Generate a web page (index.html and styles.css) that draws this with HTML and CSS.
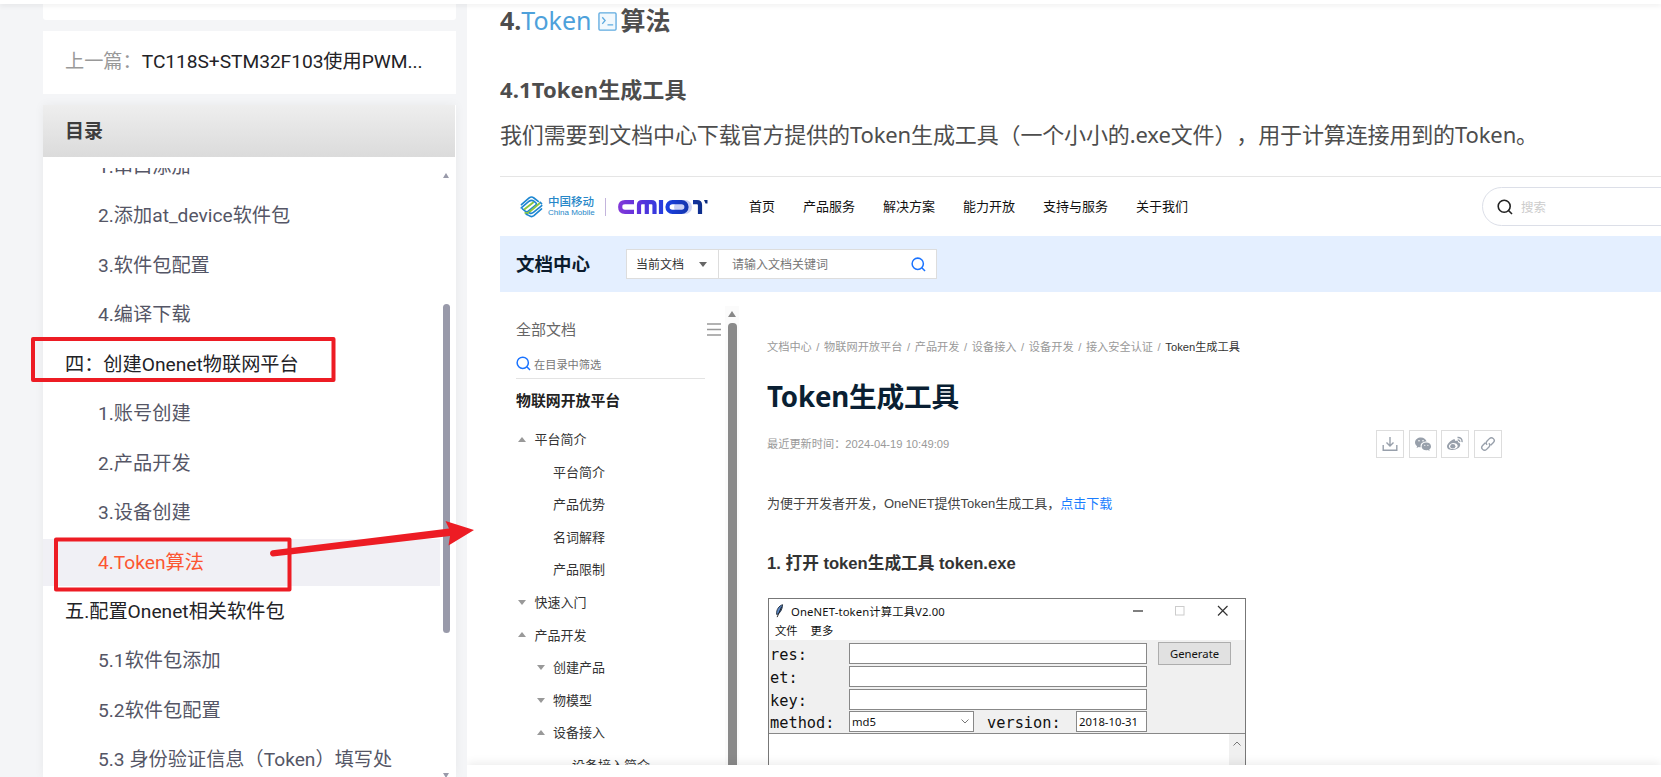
FILE: index.html
```html
<!DOCTYPE html>
<html lang="zh-CN">
  <head>
    <meta charset="UTF-8" />
    <meta name="viewport" content="width=device-width, initial-scale=1.0" />
    <title>Token算法</title>
    <link rel="stylesheet" href="styles.css">
  </head>
  <body>
    <div class="topbar"></div>
    <div class="page">
      <aside class="sidebar">
        <div class="card card_top"></div>
        <div class="card prev_post">
          <span>上一篇：</span><a>TC118S+STM32F103使用PWM...</a>
        </div>
        <div class="toc">
          <h3 class="toc_title">目录</h3>
          <div class="toc_body">
            <ul class="toc_list">
              <li class="sub">1.串口添加</li>
              <li class="sub">2.添加at_device软件包</li>
              <li class="sub">3.软件包配置</li>
              <li class="sub">4.编译下载</li>
              <li>四：创建Onenet物联网平台</li>
              <li class="sub">1.账号创建</li>
              <li class="sub">2.产品开发</li>
              <li class="sub">3.设备创建</li>
              <li class="sub active">4.Token算法</li>
              <li>五.配置Onenet相关软件包</li>
              <li class="sub">5.1软件包添加</li>
              <li class="sub">5.2软件包配置</li>
              <li class="sub">5.3 身份验证信息（Token）填写处</li>
            </ul>
            <div class="toc_scroll">
              <i class="tri up"></i>
              <i class="thumb"></i>
              <i class="tri down"></i>
            </div>
          </div>
        </div>
      </aside>

      <main class="article">
        <div class="article_body">
          <h2>4.<a>Token<svg class="term" viewBox="0 0 20 20"><rect x="1" y="1" width="18" height="18" rx="1" /><path d="M4.5 5.5l3 3.5-3 3.5M10 13.5h6" /></svg></a>算法</h2>
          <h3>4.1Token生成工具</h3>
          <p>我们需要到文档中心下载官方提供的Token生成工具（一个小小的.exe文件），用于计算连接用到的Token。</p>

          <div class="shot">
            <div class="nav">
              <svg class="cm_logo" viewBox="0 0 24 24">
                <g fill="none" stroke-linecap="round" stroke-width="1.7">
                  <path stroke="#1c86d1" d="M1.5 9.5L9.5 2.6q2.5-2 5 0l4.5 3.6" />
                  <path stroke="#1c86d1" d="M1.3 13L9.5 6q2.5-2 5 0l1.8 1.4q1.6 1.3 0 2.7L8.6 16.4q-1.6 1.2-3.2 0L2.6 14" />
                  <path stroke="#8cc63f" stroke-width="2" d="M5 14.2l8.7-6.9M5.5 18.2q2 .8 3.6-.4L20.5 8" />
                  <path stroke="#1c86d1" d="M22.5 14L14.5 21q-2.5 2-5 0L6.5 19.5" />
                  <path stroke="#1c86d1" d="M22.7 10.5L14 17.7q-2 1.6-4 .5M21 7l1.5 1.5" />
                </g>
              </svg>
              <div class="cm_name"><b>中国移动</b><span>China Mobile</span></div>
              <i class="split"></i>
              <svg class="cmiot" viewBox="0 0 90 16">
                <defs>
                  <linearGradient id="iot" gradientUnits="userSpaceOnUse" x1="0" y1="0" x2="90" y2="0">
                    <stop offset="0" stop-color="#8338d8" />
                    <stop offset=".25" stop-color="#5b32dc" />
                    <stop offset=".55" stop-color="#1a3fdf" />
                    <stop offset="1" stop-color="#0b2a7c" />
                  </linearGradient>
                </defs>
                <rect x="56" y="1" width="18" height="14" rx="7" fill="#c9d0f5" />
                <g fill="none" stroke="url(#iot)" stroke-width="4.2">
                  <path d="M16 3.1H7q-4.800 0-4.800 4.900T7 12.900h9" />
                  <path d="M21 15V6q0-2.900 3-2.900h9.500q3 0 3 2.900v9M28.800 4v11" />
                  <path d="M43 1v14" />
                  <rect x="49.500" y="3.100" width="19" height="9.800" rx="4.900" />
                  <path d="M75 3.100h4q3 0 3 3V15" />
                </g>
                <path d="M86 1h3.500v3.500h-2z" fill="#0b2a7c" />
              </svg>
              <ul class="menu">
                <li>首页</li>
                <li>产品服务</li>
                <li>解决方案</li>
                <li>能力开放</li>
                <li>支持与服务</li>
                <li>关于我们</li>
              </ul>
              <div class="pill">
                <svg class="search" viewBox="0 0 16 16"><circle cx="7.200" cy="7.200" r="6" /><path d="M11.500 11.500l3.500 3.500" /></svg>
                搜索
              </div>
            </div>

            <div class="banner">
              <strong>文档中心</strong>
              <div class="finder">
                <span class="scope">当前文档<i class="tri down"></i></span>
                <span class="keyword">请输入文档关键词</span>
                <svg class="search" viewBox="0 0 16 16"><circle cx="7.200" cy="7.200" r="6" /><path d="M11.500 11.500l3.500 3.500" /></svg>
              </div>
            </div>

            <div class="docs">
              <div class="tree">
                <div class="tree_head">全部文档
                  <svg viewBox="0 0 14 13"><path d="M0 1h14M0 6.500h14M0 12h14" /></svg>
                </div>
                <div class="tree_filter">
                  <svg class="search" viewBox="0 0 16 16"><circle cx="7.200" cy="7.200" r="6" /><path d="M11.500 11.500l3.500 3.500" /></svg>
                  在目录中筛选
                </div>
                <div class="tree_title">物联网开放平台</div>
                <ul>
                  <li><i class="tri up"></i>平台简介</li>
                  <li class="lv2">平台简介</li>
                  <li class="lv2">产品优势</li>
                  <li class="lv2">名词解释</li>
                  <li class="lv2">产品限制</li>
                  <li><i class="tri down"></i>快速入门</li>
                  <li><i class="tri up"></i>产品开发</li>
                  <li class="lv2"><i class="tri down"></i>创建产品</li>
                  <li class="lv2"><i class="tri down"></i>物模型</li>
                  <li class="lv2"><i class="tri up"></i>设备接入</li>
                  <li class="lv3">设备接入简介</li>
                </ul>
              </div>
              <div class="tree_scroll"><i class="tri up"></i><i class="thumb"></i></div>

              <div class="doc">
                <div class="crumbs">
                  <span>文档中心</span><span>物联网开放平台</span><span>产品开发</span><span>设备接入</span><span>设备开发</span><span>接入安全认证</span><span class="now">Token生成工具</span>
                </div>
                <h1>Token生成工具</h1>
                <div class="meta">
                  <span class="time">最近更新时间：2024-04-19 10:49:09</span>
                  <div class="share">
                    <span><svg viewBox="0 0 16 16"><path class="line" d="M1.200 9v5.300h13.600V9M8 1v8.500M4.500 6.500L8 10l3.500-3.500" /></svg></span>
                    <span><svg viewBox="0 0 16 16"><path d="M6 1.500C2.700 1.500 0 3.600 0 6.400c0 1.500.8 2.800 2.100 3.700L1.600 12l2.100-1.100q1 .3 2 .3C5 7.800 7.600 5.600 11.600 5.600 11 3.200 8.800 1.500 6 1.500zM11.300 6.500c-2.700 0-4.700 1.700-4.700 3.900s2 3.900 4.700 3.900q.8 0 1.600-.2l1.700.9-.4-1.500c1.100-.7 1.800-1.800 1.800-3.100 0-2.200-2-3.900-4.700-3.900z" /><g fill="#fff"><circle cx="4" cy="4.800" r=".8" /><circle cx="8" cy="4.800" r=".8" /><circle cx="9.800" cy="9.300" r=".6" /><circle cx="12.900" cy="9.300" r=".6" /></g></svg></span>
                    <span><svg viewBox="0 0 16 16"><path fill-rule="evenodd" d="M6.200 3.500c1-.5 2.200-.2 1.900 1.500 1.600-.6 3.300-.5 2.900 1.300 3.500 1 2.400 4.300.4 5.800C7 15.300 0 14.200 0 10.400 0 8 3.500 4.600 6.200 3.500zM6 7C3.600 7.200 1.800 8.700 1.900 10.400S4.200 13.200 6.600 13s4.200-1.700 4.100-3.300S8.400 6.800 6 7z" /><ellipse cx="5.800" cy="10.300" rx="2.600" ry="2.200" /><path class="line" d="M10.500 1.500c2.800-.4 5 1.800 4.500 4.600M10.700 4c1.400-.2 2.200.8 2 1.900" /></svg></span>
                    <span><svg viewBox="0 0 16 16"><g class="line" transform="rotate(-45 8 8)"><path d="M7 5.200H3.200a2.800 2.800 0 0 0 0 5.600h3.300a2.800 2.800 0 0 0 2.700-2.800M9 10.800h3.800a2.800 2.800 0 0 0 0-5.600H9.500A2.800 2.800 0 0 0 6.800 8" /></g></svg></span>
                  </div>
                </div>
                <p class="intro">为便于开发者开发，OneNET提供Token生成工具，<a>点击下载</a></p>
                <h4>1. 打开 token生成工具 token.exe</h4>

                <div class="win">
                  <div class="win_title">
                    <svg class="feather" viewBox="0 0 10 16"><path d="M8.500.8C4.500 2 1 6.500 1.800 12c3-.5 6.500-5 6.700-11.200z" fill="#5b86c4" stroke="#1c2733" /><path d="M7.500 3L2.300 15" stroke="#111" fill="none" /></svg>
                    <span>OneNET-token计算工具V2.00</span>
                    <svg class="ctrl" viewBox="0 0 96 12"><path d="M1 6h10" stroke="#555" stroke-width="1.500" /><rect x="43.500" y="1.500" width="8.500" height="8.500" stroke="#ccc" /><path d="M86 1l9.500 9.500M95.500 1L86 10.500" stroke="#333" stroke-width="1.200" /></svg>
                  </div>
                  <div class="win_menu"><span>文件</span><span>更多</span></div>
                  <div class="form">
                    <label>res:</label><i class="input wide"></i><button>Generate</button>
                    <label>et:</label><i class="input wide"></i>
                    <label>key:</label><i class="input wide"></i>
                    <label>method:</label><span class="input">md5<svg viewBox="0 0 8 5"><path d="M.5.500L4 4 7.500.500" /></svg></span><label class="version">version:</label><span class="input">2018-10-31</span>
                  </div>
                  <div class="output">
                    <div class="output_bar"><svg viewBox="0 0 8 5"><path d="M.5 4.500L4 1l3.500 3.500" /></svg></div>
                  </div>
                </div>
              </div>
            </div>
          </div>
        </div>
        <div class="toolbar"></div>
      </main>
    </div>

    <!-- 标注 -->
    <svg class="marks" viewBox="0 0 500 777">
      <rect x="33" y="339" width="300.500" height="41" />
      <rect x="56" y="539.500" width="233.500" height="50" />
      <path d="M272.500 550.200L449 528.500l-3.500-7.500L474 530l-25.500 15.500 1.500-9.500L273 556.500a3.200 3.200 0 0 1-.5-6.300z" />
    </svg>
  </body>
</html>
```

FILE: styles.css
```css
* {
  margin: 0;
  padding: 0;
  box-sizing: border-box;
}
li {
  list-style: none;
}
i {
  font-style: normal;
}
body {
  height: 777px;
  overflow: hidden;
  position: relative;
  background: #f4f5f7;
  font-family: Roboto, "Noto Sans CJK SC", sans-serif;
  white-space: nowrap;
  text-spacing-trim: space-all;
}
.topbar {
  position: relative;
  z-index: 2;
  height: 4px;
  background: #fff;
  box-shadow: 0 2px 5px rgba(0, 0, 0, 0.07);
}
.page {
  display: flex;
  height: 773px;
}

/* triangles */
.tri {
  display: block;
  width: 0;
  height: 0;
  border: 4px solid transparent;
}
.tri.up {
  border-top: 0;
  border-bottom: 5px solid #999;
}
.tri.down {
  border-bottom: 0;
  border-top: 5px solid #999;
}
.search {
  fill: none;
  stroke: #1a73ff;
  stroke-width: 1.6;
}

/* sidebar */
.sidebar {
  width: 413px;
  margin-left: 43px;
  display: flex;
  flex-direction: column;
  gap: 11px;
  font-size: 19.2px;
}
.card {
  background: #fff;
}
.card_top {
  height: 16px;
  border-radius: 0 0 3px 3px;
}
.prev_post {
  height: 63px;
  line-height: 61px;
  padding-left: 22px;
  color: #999;
}
.prev_post a {
  color: #222226;
  letter-spacing: -0.05px;
}
.toc {
  flex: 1;
  min-height: 0;
  display: flex;
  flex-direction: column;
  background: #fff;
  box-shadow: 0 0 10px rgba(0, 0, 0, 0.05);
}
.toc_title {
  height: 52px;
  margin-right: 1px;
  line-height: 54px;
  padding-left: 22px;
  font-size: 19px;
  color: #3d3d3d;
  background: linear-gradient(#eee, #dbdbdb);
}
.toc_body {
  flex: 1;
  min-height: 0;
  margin-top: 11px;
  display: flex;
  overflow: hidden;
}
.toc_list {
  width: 397px;
  margin-top: -25px;
}
.toc_list li {
  height: 47px;
  margin-bottom: 2.45px;
  line-height: 47px;
  padding-left: 22px;
  color: #222226;
}
.toc_list .sub {
  padding-left: 55px;
  color: #555666;
}
.toc_list .active {
  background: #f0f0f5;
  color: #fc5531;
}
.toc_scroll {
  width: 7px;
  margin-left: 3px;
  padding-top: 5px;
  display: flex;
  flex-direction: column;
}
.toc_scroll .tri {
  border-left-width: 3.5px;
  border-right-width: 3.5px;
}
.toc_scroll .up {
  border-bottom-color: #999aaa;
}
.toc_scroll .down {
  margin-top: 140px;
  border-top-color: #999aaa;
}
.toc_scroll .thumb {
  flex: none;
  height: 329px;
  margin-top: 126px;
  border-radius: 4px;
  background: #999aaa;
}

/* article */
.article {
  flex: 1;
  min-width: 0;
  margin-left: 11px;
  background: #fff;
  overflow: hidden;
  color: #4d4d4d;
  font-family: "Noto Sans", "Noto Sans CJK SC", sans-serif;
}
.article_body {
  height: 761px;
  padding-left: 33px;
  overflow: hidden;
}
.article h2 {
  height: 34px;
  line-height: 33px;
  font-size: 25px;
}
.article h2 a {
  font-weight: 400;
  color: #4ea1db;
}
.term {
  width: 19px;
  height: 19px;
  margin: 0 4px 0 6px;
  vertical-align: -1px;
  fill: #f1f8fd;
  stroke: #5fabe0;
  stroke-width: 1.4;
}
.article h3 {
  height: 32px;
  margin-top: 35px;
  line-height: 32px;
  font-size: 22px;
  letter-spacing: 0.1px;
}
.article_body > p {
  height: 36px;
  margin: 11px 0 24px;
  line-height: 36px;
  font-size: 22px;
  letter-spacing: -0.13px;
}
.toolbar {
  position: relative;
  height: 12px;
  background: #fff;
  box-shadow: 0 -2px 10px rgba(0, 0, 0, 0.08);
}

/* doc center */
.shot {
  border-top: 1px solid #e5e5e5;
  font-size: 13px;
  color: #333;
}
.nav {
  height: 59px;
  display: flex;
  align-items: center;
  padding-left: 20px;
}
.nav > * {
  flex: none;
}
.cm_logo {
  width: 23px;
  height: 24px;
}
.cm_name {
  width: 47px;
  margin-left: 5px;
  color: #2787c8;
}
.cm_name b,
.cm_name span {
  display: block;
  font-size: 11.5px;
  line-height: 12px;
  font-weight: 500;
}
.cm_name span {
  font-family: "Liberation Sans", sans-serif;
  font-size: 8px;
  line-height: 9px;
}
.split {
  width: 1px;
  height: 18px;
  margin: 0 12px 0 10px;
  background: #c3b4dc;
}
.cmiot {
  width: 90px;
  height: 16px;
}
.menu {
  display: flex;
  gap: 28px;
  margin: 0 0 2px 41px;
  color: #111;
}
.pill {
  width: 300px;
  height: 39px;
  margin-left: 294px;
  padding-left: 14px;
  display: flex;
  align-items: center;
  gap: 8px;
  border: 1px solid #dcdfe8;
  border-radius: 20px;
  font-size: 12.5px;
  color: #ccc;
}
.pill .search {
  width: 16px;
  height: 16px;
  stroke: #222;
}
.banner {
  height: 56px;
  display: flex;
  align-items: center;
  padding-left: 16px;
  background: #e4efff;
}
.banner strong {
  width: 110px;
  margin-bottom: 2px;
  font-size: 18.5px;
  color: #0b1b2d;
}
.finder {
  width: 311px;
  height: 30px;
  display: flex;
  align-items: center;
  padding-right: 10px;
  border: 1px solid #ddd;
  background: #fff;
  font-size: 12px;
}
.scope {
  width: 92px;
  height: 28px;
  padding: 0 11px 0 9px;
  display: flex;
  align-items: center;
  justify-content: space-between;
  border-right: 1px solid #ddd;
}
.scope .tri {
  border-top-color: #666;
}
.keyword {
  flex: 1;
  padding-left: 13px;
  color: #777;
}
.finder .search {
  width: 15px;
  height: 15px;
}
.docs {
  display: flex;
}
.tree {
  width: 225px;
  padding: 21px 0 0 16px;
}
.tree_head {
  height: 30px;
  padding-right: 4px;
  display: flex;
  align-items: center;
  justify-content: space-between;
  font-size: 15px;
  color: #666;
}
.tree_head svg {
  width: 14px;
  height: 13px;
  margin-top: 2px;
  stroke: #999;
  stroke-width: 1.6;
}
.tree_filter {
  width: 189px;
  height: 28px;
  margin-top: 8px;
  padding-bottom: 2px;
  display: flex;
  align-items: center;
  gap: 3px;
  border-bottom: 1px solid #e3e3e3;
  font-size: 11.2px;
  color: #777;
}
.tree_filter .search {
  width: 15px;
  height: 15px;
}
.tree_title {
  height: 44px;
  line-height: 43px;
  font-size: 14.9px;
  font-weight: 700;
  color: #222;
}
.tree li {
  height: 32.6px;
  line-height: 32.6px;
  padding-left: 18.5px;
  display: flex;
  align-items: center;
}
.tree .lv2 {
  padding-left: 37px;
}
.tree .lv3 {
  padding-left: 56px;
}
.tree li .tri {
  margin: 0 8.5px 0 -16.5px;
}
.tree_scroll {
  width: 14px;
  margin-top: 14px;
  padding: 5px 2px 0 3px;
  background: #fbfbfb;
}
.tree_scroll .tri {
  border-bottom: 6px solid #888;
}
.tree_scroll .thumb {
  display: block;
  height: 460px;
  margin-top: 6px;
  border-radius: 4px;
  background: #8a8a8a;
}
.doc {
  padding: 45px 0 0 28px;
}
.crumbs {
  height: 20px;
  line-height: 20px;
  font-size: 11.2px;
  color: #999;
}
.crumbs span + span::before {
  content: "/";
  margin: 0 4.6px;
  color: #999;
}
.crumbs .now {
  color: #333;
}
.doc h1 {
  height: 40px;
  margin-top: 19px;
  line-height: 40px;
  font-size: 27.7px;
  letter-spacing: -0.2px;
  color: #0a1f33;
}
.meta {
  width: 735px;
  height: 28px;
  margin-top: 14px;
  display: flex;
  align-items: center;
  justify-content: space-between;
  font-size: 11.2px;
  color: #999;
}
.time,
.intro,
.crumbs,
.doc h4 {
  font-family: "Liberation Sans", "Noto Sans CJK SC", sans-serif;
}
.time {
  margin-bottom: 2px;
}
.share {
  display: flex;
  gap: 4.7px;
}
.share span {
  width: 28px;
  height: 28px;
  display: flex;
  align-items: center;
  justify-content: center;
  border: 1px solid #ddd;
}
.share svg {
  width: 16px;
  height: 16px;
  fill: #98a0ab;
}
.share .line {
  fill: none;
  stroke: #98a0ab;
  stroke-width: 1.4;
}
.intro {
  height: 24px;
  margin-top: 34px;
  line-height: 24px;
  color: #444;
}
.intro a {
  color: #1a7dff;
}
.doc h4 {
  height: 24px;
  margin-top: 36px;
  line-height: 24px;
  font-size: 16.65px;
  color: #333;
}

/* token tool window */
.win {
  width: 478px;
  height: 200px;
  margin: 22px 0 0 1px;
  border: 1px solid #777;
  background: #f0f0f0;
  font-size: 11.3px;
  color: #111;
}
.win_title {
  height: 23px;
  padding: 0 17px 0 6px;
  display: flex;
  align-items: center;
  background: #fff;
}
.win_title span {
  letter-spacing: 0.13px;
}
.feather {
  width: 9px;
  height: 14px;
  margin-right: 7px;
}
.ctrl {
  width: 96px;
  height: 12px;
  margin-left: auto;
  fill: none;
}
.win_menu {
  height: 18px;
  padding-left: 6px;
  display: flex;
  gap: 13px;
  line-height: 18px;
  background: #fff;
}
.form {
  display: grid;
  grid-template-columns: 79px 125px 102px 71px 73px;
  grid-template-rows: repeat(4, 21px);
  row-gap: 1.8px;
  padding: 3px 0 0 1px;
}
.form label {
  grid-column: 1;
  font-family: "DejaVu Sans Mono", monospace;
  font-size: 15.3px;
  line-height: 24px;
}
.form .version {
  grid-column: 3;
  padding-left: 13px;
}
.input {
  display: flex;
  align-items: center;
  justify-content: space-between;
  padding: 0 4px 0 2px;
  border: 1px solid #888;
  background: #fff;
}
.input.wide {
  grid-column: 2 / 5;
}
.input svg,
.output_bar svg {
  width: 8px;
  height: 5px;
  fill: none;
  stroke: #777;
}
.form button {
  margin-left: 11px;
  width: 73px;
  height: 23px;
  margin-top: -1px;
  border: 1px solid #adadad;
  background: #e1e1e1;
  font: inherit;
  color: #111;
}
.output {
  height: 80px;
  margin-top: 1px;
  background: #fff;
  border-top: 1px solid #888;
  display: flex;
  justify-content: flex-end;
}
.output_bar {
  width: 16px;
  padding: 5px 4px;
  line-height: 5px;
  background: #f0f0f0;
}

/* red marks over the page */
.marks {
  position: absolute;
  left: 0;
  top: 0;
  z-index: 3;
  width: 500px;
  height: 777px;
  fill: #ed1c24;
}
.marks rect {
  fill: none;
  stroke: #ed1c24;
  stroke-width: 4;
  stroke-linejoin: round;
}
```
